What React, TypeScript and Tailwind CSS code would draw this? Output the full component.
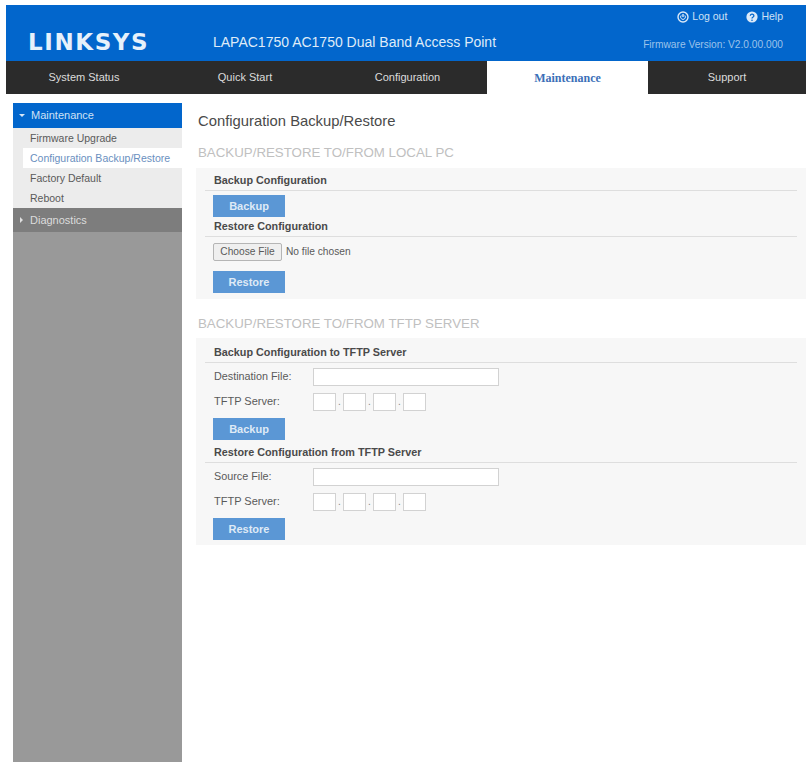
import React from 'react';

const font = { fontFamily: '"Liberation Sans", Arial, sans-serif' };

const LogoutIcon = () => (
  <svg width="12" height="12" viewBox="0 0 12 12" fill="none" stroke="#dbe9f8">
    <circle cx="6" cy="6" r="5" strokeWidth="1.4" />
    <path d="M6 3v3" strokeWidth="1.4" />
    <path d="M4.2 4.4a2.4 2.4 0 1 0 3.6 0" strokeWidth="1" />
  </svg>
);

const HelpIcon = () => (
  <svg width="12" height="12" viewBox="0 0 12 12" fill="none">
    <circle cx="6" cy="6" r="5.6" fill="#dbe9f8" />
    <path d="M4.3 4.7a1.8 1.6 0 1 1 2.6 1.5c-.6.4-.9.6-.9 1.2" stroke="#0266cc" strokeWidth="1.3" />
    <circle cx="6" cy="9.2" r=".8" fill="#0266cc" />
  </svg>
);

const Btn = ({ label }: { label: string }) => (
  <button className="block w-[72px] h-[22px] bg-[#5b97d5] text-[#dfeaf6] text-[11px] font-bold leading-[22px] text-center">
    {label}
  </button>
);

const SubHead = ({ label }: { label: string }) => (
  <div className="h-[20px] mx-[9px] border-b border-[#dedede] pl-[9px] text-[10.8px] font-bold text-[#4a4a4a] leading-[18px]">
    {label}
  </div>
);

const IpRow = ({ label }: { label: string }) => (
  <div className="flex items-center h-[25px] pl-[18px] text-[11px] text-[#5a5a5a]">
    <span className="w-[99px]">{label}</span>
    <div className="flex items-center">
      {[0, 1, 2, 3].map((i) => (
        <React.Fragment key={i}>
          {i > 0 && <span className="w-[7px] text-center text-[10px] text-[#888]">.</span>}
          <div className="w-[23px] h-[18px] bg-white border border-[#d2d2d2]" />
        </React.Fragment>
      ))}
    </div>
  </div>
);

const FileRow = ({ label }: { label: string }) => (
  <div className="flex items-center h-[25px] mt-[1px] pl-[18px] text-[10.8px] text-[#5a5a5a]">
    <span className="w-[99px]">{label}</span>
    <div className="w-[186px] h-[18px] bg-white border border-[#d2d2d2]" />
  </div>
);

export default function App() {
  const tabs = [
    { name: 'System Status', w: 'w-[156px]' },
    { name: 'Quick Start', w: 'w-[166px]' },
    { name: 'Configuration', w: 'w-[159px]' },
    { name: 'Maintenance', w: 'w-[161px]', active: true },
    { name: 'Support', w: 'w-[158px]' },
  ];

  return (
    <div className="h-[762px] bg-white overflow-hidden pt-[5px]" style={font}>
      {/* Header */}
      <div className="ml-[6px] w-[800px] h-[56px] bg-[#0266cc] flex text-white">
        <div className="w-[22px]" />
        <div
          className="w-[185px] pt-[23px] text-[23px] leading-[28px] font-bold tracking-[1.6px] text-[#e6f1fb]"
          style={{ fontFamily: '"DejaVu Sans", sans-serif' }}
        >
          LINKSYS
        </div>
        <div className="w-[374px] pt-[28px] text-[14px] leading-[18px] text-[#dfebf8] whitespace-nowrap">
          LAPAC1750 AC1750 Dual Band Access Point
        </div>
        <div className="flex-1 pr-[23px] flex flex-col items-end text-[10.5px] text-[#cfe1f5]">
          <div className="flex items-center gap-[3px] h-[12px] mt-[6px]">
            <LogoutIcon />
            <span className="mr-[16px]">Log out</span>
            <HelpIcon />
            <span>Help</span>
          </div>
          <div className="mt-[14px] text-[10.2px] text-[#9cc3ea] whitespace-nowrap">Firmware Version: V2.0.00.000</div>
        </div>
      </div>

      {/* Nav tabs */}
      <div className="ml-[6px] w-[800px] h-[33px] bg-[#2b2b2b] flex">
        {tabs.map((t) => (
          <div
            key={t.name}
            className={`${t.w} h-full flex items-center justify-center ${
              t.active ? 'bg-white text-[#3c6fb8] font-bold text-[12px]' : 'text-[#dcdcdc] text-[11px]'
            }`}
            style={t.active ? { fontFamily: '"Liberation Serif", serif' } : undefined}
          >
            {t.name}
          </div>
        ))}
      </div>

      <div className="flex mt-[9px]">
        {/* Sidebar */}
        <div className="ml-[13px] w-[169px] h-[659px] bg-[#999999] text-[10.5px]">
          <div className="h-[25px] bg-[#0266cc] text-[#cfe1f5] text-[11px] flex items-center">
            <span className="w-[5px] ml-[6px] mr-[6px] border-x-[3px] border-t-[3px] border-x-transparent border-t-[#d8e7f7]" />
            Maintenance
          </div>
          <div className="bg-[#ececec] text-[#5a5a5a]">
            <div className="h-[20px] pl-[17px] leading-[20px]">Firmware Upgrade</div>
            <div className="h-[20px] ml-[10px] pl-[7px] leading-[20px] bg-white text-[#6a8fc0] whitespace-nowrap">
              Configuration Backup/Restore
            </div>
            <div className="h-[20px] pl-[17px] leading-[20px]">Factory Default</div>
            <div className="h-[20px] pl-[17px] leading-[20px]">Reboot</div>
          </div>
          <div className="h-[24px] bg-[#7d7d7d] text-[#dcdcdc] text-[11px] flex items-center">
            <span className="ml-[7px] mr-[7px] border-y-[3px] border-l-[3px] border-y-transparent border-l-[#e0e0e0]" />
            Diagnostics
          </div>
        </div>

        {/* Main */}
        <div className="ml-[14px] w-[610px]">
          <div className="ml-[2px] mt-[6px] h-[24px] text-[14.8px] leading-[24px] text-[#4a4a4a]">
            Configuration Backup/Restore
          </div>
          <div className="ml-[2px] mt-[9px] h-[21px] text-[13.3px] leading-[21px] text-[#c0c0c0] whitespace-nowrap">
            BACKUP/RESTORE TO/FROM LOCAL PC
          </div>

          <div className="mt-[5px] h-[131px] bg-[#f7f7f7] pt-[3px]">
            <SubHead label="Backup Configuration" />
            <div className="pl-[17px] pt-[4px]">
              <Btn label="Backup" />
            </div>
            <SubHead label="Restore Configuration" />
            <div className="flex items-center h-[30px] pl-[17px] text-[10.2px] text-[#5a5a5a]">
              <button className="h-[18px] w-[69px] bg-[#efefef] border border-[#b5b5b5] rounded-[2px] text-[#5a5a5a] text-[10.2px]">
                Choose File
              </button>
              <span className="ml-[4px]">No file chosen</span>
            </div>
            <div className="pl-[17px] pt-[4px]">
              <Btn label="Restore" />
            </div>
          </div>

          <div className="ml-[2px] mt-[14px] h-[21px] text-[13.3px] leading-[21px] text-[#c0c0c0] whitespace-nowrap">
            BACKUP/RESTORE TO/FROM TFTP SERVER
          </div>

          <div className="mt-[4px] h-[207px] bg-[#f7f7f7] pt-[5px]">
            <SubHead label="Backup Configuration to TFTP Server" />
            <FileRow label="Destination File:" />
            <IpRow label="TFTP Server:" />
            <div className="pl-[17px] pt-[4px]">
              <Btn label="Backup" />
            </div>
            <div className="h-[3px]" />
            <SubHead label="Restore Configuration from TFTP Server" />
            <FileRow label="Source File:" />
            <IpRow label="TFTP Server:" />
            <div className="pl-[17px] pt-[4px]">
              <Btn label="Restore" />
            </div>
          </div>
        </div>
      </div>
    </div>
  );
}
